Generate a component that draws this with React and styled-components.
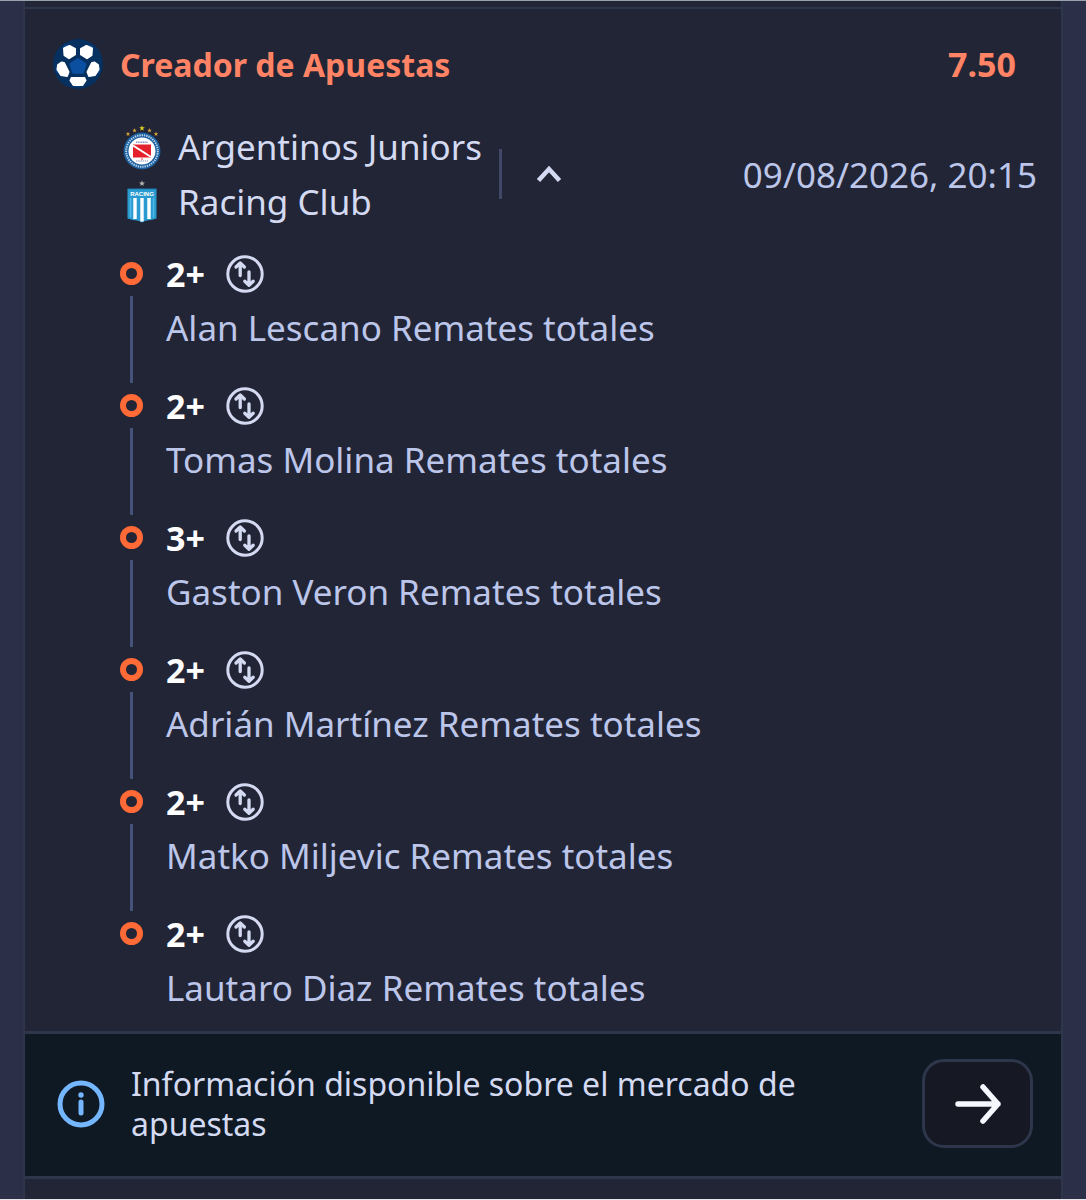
import React, {useState} from 'react';
import styled, { createGlobalStyle } from 'styled-components';

const Colors = {
  page: '#2b3048',
  card: '#222535',
  border: '#2d364a',
  rail: '#45527a',
  info: '#0f1923',
  button: '#161923',
  accent: '#ff8364',
  ring: '#ff6a37',
  blue: '#74b6ff',
  text: '#d3daf2',
  muted: '#bcc6ea',
};

const GlobalStyle = createGlobalStyle`
  * {
    box-sizing: border-box;
  }
  body {
    margin: 0;
    background-color: ${Colors.page};
    font-family: 'Noto Sans', 'Open Sans', sans-serif;
  }
  svg {
    display: block;
    flex: none;
  }
`;

const Page = styled.div`
  display: flex;
  flex-direction: column;
  min-height: 100vh;
  padding: 0 23px;
  border-top: 1px solid #98a2ad;
  border-bottom: 1px solid #e4e6ea;
`;

const Card = styled.main`
  flex: 1;
  border: solid ${Colors.border};
  border-width: 0 2px;
  background-color: ${Colors.card};
`;

const Edge = styled.div`
  height: 8px;
  border-bottom: 2px solid ${Colors.border};
`;

const Header = styled.header`
  display: flex;
  align-items: center;
  height: 110px;
  padding: 0 45px 0 28px;
  color: ${Colors.accent};
  font-size: 34px;
  font-weight: 700;
`;

const Title = styled.h1`
  flex: 1;
  margin: 0 0 0 17px;
  font-size: 32px;
  font-weight: 700;
`;

const Match = styled.section`
  display: flex;
  align-items: center;
  padding: 0 24px 0 96px;
  color: ${Colors.text};
`;

const Team = styled.div`
  display: flex;
  align-items: center;
  gap: 15px;
  height: 55px;
  font-size: 35px;
`;

const Divider = styled.div`
  width: 3px;
  height: 50px;
  margin: 0 24px 0 17px;
  background-color: #414867;
`;

const Toggle = styled.button`
  padding: 10px;
  border: 0;
  background: none;
  color: ${Colors.text};
  cursor: pointer;
`;

const Kickoff = styled.time`
  margin-left: auto;
  color: ${Colors.muted};
  font-size: 35px;
`;

const Legs = styled.ul`
  margin: 0;
  padding: 22px 24px 10px 94px;
  list-style: none;
`;

const Leg = styled.li`
  display: flex;
  gap: 23px;
`;

const Rail = styled.div`
  display: flex;
  flex-direction: column;
  align-items: center;
  gap: 11px;
  width: 24px;
  padding-top: 11px;

  &:after {
    content: '';
    flex: 1;
    width: 3px;
    background-color: ${Colors.rail};
  }
  li:last-child > &:after {
    display: none;
  }
`;

const Ring = styled.span`
  width: 23px;
  height: 23px;
  border: 6px solid ${Colors.ring};
  border-radius: 50%;
`;

const LegBody = styled.div`
  padding-bottom: 24px;

  li:last-child > & {
    padding-bottom: 2px;
  }
`;

const Pick = styled.div`
  display: flex;
  align-items: center;
  gap: 21px;
  height: 46px;
  color: #fff;
  font-size: 34px;
  font-weight: 700;
`;

const Market = styled.div`
  color: ${Colors.muted};
  font-size: 35px;
  line-height: 62px;
`;

const Info = styled.footer`
  display: flex;
  align-items: center;
  padding: 25px 28px 28px 32px;
  border: solid ${Colors.border};
  border-width: 3px 0;
  background-color: ${Colors.info};
`;

const InfoText = styled.p`
  flex: 1;
  max-width: 700px;
  margin: 0 auto 0 26px;
  color: ${Colors.text};
  font-size: 32px;
  line-height: 40px;
`;

const GoButton = styled.button`
  display: grid;
  place-items: center;
  width: 111px;
  height: 89px;
  padding: 0;
  border: 3px solid ${Colors.border};
  border-radius: 22px;
  background-color: ${Colors.button};
  cursor: pointer;
`;

const Ball = () => (
  <svg width="50" height="50" viewBox="0 0 50 50" aria-hidden="true">
    <circle cx="25" cy="25" r="25" fill="#06305f" />
    <circle cx="25" cy="25" r="22" fill="none" stroke="#0a4a90" strokeWidth="1.6" strokeDasharray="5 22.6" strokeDashoffset="-32" />
    <path d="M25 20.500l7 4.800-2.600 8h-8.800l-2.600-8z" fill="#0a4fa0" stroke="#0a4fa0" strokeWidth="3" strokeLinejoin="round" />
    <g fill="#fff" stroke="#fff" strokeWidth="2" strokeLinejoin="round">
      <path d="M11 9.500L16.500 7l5.500 2.800v5.700L16 19.200l-4.500-3z" />
      <path d="M39 9.500L33.500 7 28 9.800v5.700l6 3.700 4.500-3z" />
      <path d="M5 26l3.500-2.500L11 24l4.500 9-1.500 4-6-1-3.500-5.500z" />
      <path d="M45 26l-3.500-2.500L39 24l-4.500 9 1.500 4 6-1 3.500-5.500z" />
      <path d="M18.500 39h13l1 2.500L29.500 46h-9l-3-4.500z" />
    </g>
  </svg>
);

const star = (x, y, r) => {
  const pts = [];
  for (let i = 0; i < 10; i++) {
    const a = -Math.PI / 2 + (i * Math.PI) / 5;
    const d = i % 2 ? r * 0.4 : r;
    pts.push(`${(x + d * Math.cos(a)).toFixed(2)},${(y + d * Math.sin(a)).toFixed(2)}`);
  }
  return pts.join(' ');
};

const ArgentinosCrest = () => (
  <svg width="42" height="46" viewBox="0 0 42 46" aria-hidden="true">
    <g fill="#d8a63c">
      <polygon points={star(7, 10, 2.4)} />
      <polygon points={star(13.5, 6.5, 2.4)} />
      <polygon points={star(21, 4.2, 3)} fill="#e0cf1e" />
      <polygon points={star(28.5, 6.5, 2.4)} />
      <polygon points={star(35, 10, 2.4)} />
    </g>
    <circle cx="21" cy="27" r="18.5" fill="#1b5f9e" />
    <circle cx="21" cy="27" r="15.8" fill="none" stroke="#b9d3ea" strokeWidth="2" strokeDasharray="1.4 0.9" />
    <circle cx="21" cy="27" r="13.5" fill="#fff" />
    <path d="M15 18.300h12" stroke="#8a94b8" strokeWidth="1.4" strokeDasharray="1.2 0.5" />
    <path d="M12 20.500h18v13H12z" fill="#e3202b" />
    <path d="M12 21.500l18 11.500" stroke="#fff" strokeWidth="2" />
    <path d="M15 37h12" stroke="#8a94b8" strokeWidth="1.2" strokeDasharray="1.5 0.7" />
    <circle cx="21" cy="35" r="0.8" fill="#e3202b" />
  </svg>
);

const RacingCrest = () => (
  <svg width="42" height="46" viewBox="0 0 42 46" aria-hidden="true">
    <polygon points={star(21, 4.5, 3.2)} fill="#b4b2b0" />
    <path d="M6.500 10h29v29.500c-4 1.800-11 1.500-14.500 4-3.500-2.500-10.500-2.200-14.500-4z" fill="#2a9bd0" />
    <path d="M14 19v21M21 19v23.500M28 19v21" stroke="#fff" strokeWidth="3.4" />
    <path d="M9.500 19v19.500M32.500 19v19.500" stroke="#4cb9e6" strokeWidth="1.5" />
    <path d="M6.500 10h29" stroke="#1c7fb4" strokeWidth="1" />
    <text x="21" y="17" fill="#fff" fontSize="6" fontWeight="700" textAnchor="middle" fontFamily="Liberation Sans, sans-serif">RACING</text>
  </svg>
);

const Chevron = ({up}) => (
  <svg width="26" height="18" viewBox="0 0 26 18" fill="none" stroke="currentColor" strokeWidth="4.5" aria-hidden="true">
    <path d={up ? 'M2.500 15.500L13 4l10.500 11.500' : 'M2.500 3L13 14.500 23.500 3'} />
  </svg>
);

const SwapIcon = () => (
  <svg width="38" height="38" viewBox="0 0 38 38" fill="none" stroke={Colors.text} strokeWidth="3.3" strokeLinecap="round" strokeLinejoin="round" aria-hidden="true">
    <circle cx="19" cy="19" r="17.2" strokeWidth="3" />
    <path d="M14.200 20.500V9M10 12l4.200-4 4.200 4" />
    <path d="M23 17v12M18.800 26.200l4.200 4 4.200-4" />
  </svg>
);

const InfoIcon = () => (
  <svg width="48" height="48" viewBox="0 0 48 48" fill="none" stroke={Colors.blue} strokeWidth="5" strokeLinecap="round" aria-hidden="true">
    <circle cx="24" cy="24" r="21" />
    <path d="M24 22v11" />
    <circle cx="24" cy="15" r="2.7" fill={Colors.blue} stroke="none" />
  </svg>
);

const Arrow = () => (
  <svg width="48" height="42" viewBox="0 0 48 42" fill="none" stroke="#f6f8ff" strokeWidth="5.5" strokeLinecap="round" strokeLinejoin="round" aria-hidden="true">
    <path d="M4 21h40M29 4l15 17-15 17" />
  </svg>
);

const legs = [
  { pick: '2+', market: 'Alan Lescano Remates totales' },
  { pick: '2+', market: 'Tomas Molina Remates totales' },
  { pick: '3+', market: 'Gaston Veron Remates totales' },
  { pick: '2+', market: 'Adrián Martínez Remates totales' },
  { pick: '2+', market: 'Matko Miljevic Remates totales' },
  { pick: '2+', market: 'Lautaro Diaz Remates totales' },
];

const App = () => {
  const [open, setOpen] = useState(true);

  return (
    <Page>
      <GlobalStyle />
      <Card>
        <Edge />
        <Header>
          <Ball />
          <Title>Creador de Apuestas</Title>
          <span>7.50</span>
        </Header>
        <Match>
          <div>
            <Team><ArgentinosCrest />Argentinos Juniors</Team>
            <Team><RacingCrest />Racing Club</Team>
          </div>
          <Divider />
          <Toggle aria-expanded={open} onClick={() => setOpen(!open)}>
            <Chevron up={open} />
          </Toggle>
          <Kickoff dateTime="2026-08-09T20:15">09/08/2026, 20:15</Kickoff>
        </Match>
        {open ?
          <Legs>
            {legs.map((leg) => (
              <Leg key={leg.market}>
                <Rail><Ring /></Rail>
                <LegBody>
                  <Pick>{leg.pick}<SwapIcon /></Pick>
                  <Market>{leg.market}</Market>
                </LegBody>
              </Leg>
            ))}
          </Legs>
          : null }
        <Info>
          <InfoIcon />
          <InfoText>Información disponible sobre el mercado de apuestas</InfoText>
          <GoButton><Arrow /></GoButton>
        </Info>
      </Card>
    </Page>
  );
}

export default App;
